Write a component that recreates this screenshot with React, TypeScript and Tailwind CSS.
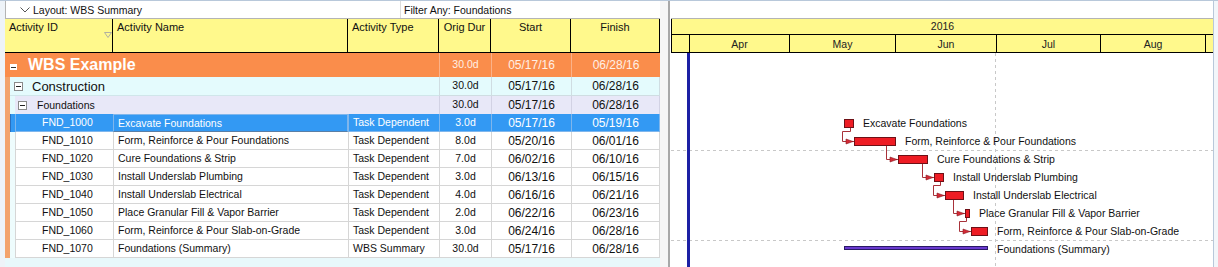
import React from 'react';

const COLS = 'grid grid-cols-[108px_235px_91px_52px_80px_89px]';

interface Act {
  id: string;
  name: string;
  type: string;
  dur: string;
  start: string;
  finish: string;
  bar: [number, number];
  summary?: boolean;
}

const acts: Act[] = [
  { id: 'FND_1000', name: 'Excavate Foundations', type: 'Task Dependent', dur: '3.0d', start: '05/17/16', finish: '05/19/16', bar: [844, 853] },
  { id: 'FND_1010', name: 'Form, Reinforce & Pour Foundations', type: 'Task Dependent', dur: '8.0d', start: '05/20/16', finish: '06/01/16', bar: [854, 895] },
  { id: 'FND_1020', name: 'Cure Foundations & Strip', type: 'Task Dependent', dur: '7.0d', start: '06/02/16', finish: '06/10/16', bar: [898, 927] },
  { id: 'FND_1030', name: 'Install Underslab Plumbing', type: 'Task Dependent', dur: '3.0d', start: '06/13/16', finish: '06/15/16', bar: [934, 943] },
  { id: 'FND_1040', name: 'Install Underslab Electrical', type: 'Task Dependent', dur: '4.0d', start: '06/16/16', finish: '06/21/16', bar: [945, 963] },
  { id: 'FND_1050', name: 'Place Granular Fill & Vapor Barrier', type: 'Task Dependent', dur: '2.0d', start: '06/22/16', finish: '06/23/16', bar: [965, 969] },
  { id: 'FND_1060', name: 'Form, Reinforce & Pour Slab-on-Grade', type: 'Task Dependent', dur: '3.0d', start: '06/24/16', finish: '06/28/16', bar: [971, 987] },
  { id: 'FND_1070', name: 'Foundations (Summary)', type: 'WBS Summary', dur: '30.0d', start: '05/17/16', finish: '06/28/16', bar: [844, 987], summary: true },
];

// gantt canvas origin in page coords
const X0 = 671;
const Y0 = 53;
const rowTop = (i: number) => 114 + i * 18;

const months: [string, number][] = [
  ['', 18],
  ['Apr', 100],
  ['May', 106],
  ['Jun', 101],
  ['Jul', 104],
  ['Aug', 105],
  ['', 8],
];

function MinusBox({ small }: { small?: boolean }) {
  if (small) {
    return (
      <span className="flex h-[6px] w-[7px] items-center justify-center bg-white">
        <span className="h-px w-[5px] bg-[#333]" />
      </span>
    );
  }
  return (
    <span className="flex h-[9px] w-[9px] shrink-0 items-center justify-center border border-[#8a8a8a] bg-white">
      <span className="h-px w-[5px] bg-[#222]" />
    </span>
  );
}

function HeaderCell({ children, center }: { children?: React.ReactNode; center?: boolean }) {
  return (
    <div className={`relative border-r border-black px-[4px] pt-[2px] leading-[13px] text-[11px] text-[#111] ${center ? 'text-center' : ''}`}>
      {children}
    </div>
  );
}

function Gantt() {
  const conns: string[] = [];
  for (let i = 0; i < 6; i++) {
    const [pl, pr] = acts[i].bar;
    const nl = acts[i + 1].bar[0];
    const pb = rowTop(i) + 13 - Y0;
    const cy = rowTop(i + 1) + 9 - Y0;
    const vx = nl - 12;
    if (vx >= pl && vx <= pr) {
      conns.push(`M${vx - X0 + 0.5} ${pb} V${cy + 0.5} H${nl - X0}`);
    } else {
      const jx = pr - 3;
      conns.push(`M${jx - X0 + 0.5} ${pb} V${pb + 4.5} H${vx - X0 + 0.5} V${cy + 0.5} H${nl - X0}`);
    }
  }

  return (
    <div className="flex w-[542px] flex-col">
      <div className="h-[18px] border-b border-[#b4b4b4] bg-white" />
      <div className="flex h-[34px] flex-col border-b border-l border-black bg-[#fff98c] text-[10.5px] text-[#222]">
        <div className="flex h-[16px] items-center justify-center border-b border-black leading-none">2016</div>
        <div className="flex flex-1">
          {months.map(([m, w], i) => (
            <div
              key={i}
              style={{ width: w }}
              className={`flex shrink-0 items-center justify-center pt-px leading-none ${i < months.length - 1 ? 'border-r border-black' : ''}`}
            >
              {m}
            </div>
          ))}
        </div>
      </div>
      <div className="relative flex-1 bg-white">
        <svg className="absolute inset-0" width={542} height={214}>
          <line x1={0} x2={542} y1={97.5} y2={97.5} stroke="#c8c8c8" strokeDasharray="3 3" />
          <line x1={0} x2={542} y1={187.5} y2={187.5} stroke="#c8c8c8" strokeDasharray="3 3" />
          <line x1={324.5} x2={324.5} y1={0} y2={214} stroke="#c8c8c8" strokeDasharray="3 3" />
          <rect x={16} y={0} width={3} height={214} fill="#1c20a4" />
          {conns.map((d, i) => {
            const nl = acts[i + 1].bar[0] - X0;
            const cy = rowTop(i + 1) + 9 - Y0 + 0.5;
            return (
              <g key={i}>
                <path d={d} fill="none" stroke="#a8323a" strokeWidth={1} />
                <polygon points={`${nl - 8},${cy - 2.5} ${nl - 1},${cy} ${nl - 8},${cy + 2.5}`} fill="#d42a36" stroke="#8a1c24" strokeWidth={0.6} />
              </g>
            );
          })}
          {acts.map((a, i) => {
            const [l, r] = a.bar;
            if (a.summary) {
              return (
                <rect key={a.id} x={l - X0 + 0.5} y={rowTop(i) + 6 - Y0 + 0.5} width={r - l} height={3} fill="#6a3ad0" stroke="#2a1a66" />
              );
            }
            return (
              <rect key={a.id} x={l - X0 + 0.5} y={rowTop(i) + 5 - Y0 + 0.5} width={r - l} height={8} fill="#ee1c24" stroke="#6e1016" />
            );
          })}
        </svg>
        {acts.map((a, i) => (
          <span
            key={a.id}
            className="absolute whitespace-nowrap text-[10.5px] leading-[13px] text-[#111]"
            style={{ left: a.bar[1] + 10 - X0, top: rowTop(i) + 3 - Y0 }}
          >
            {a.name}
          </span>
        ))}
      </div>
    </div>
  );
}

export default function App() {
  return (
    <div className="flex h-[267px] w-[1218px] overflow-hidden border-t border-[#b8c8da] bg-white font-['Liberation_Sans',Arial,sans-serif] text-[10.5px] text-[#111]">
      {/* grid panel */}
      <div className="flex w-[660px] flex-col bg-[#eef3f8] pl-[5px]">
        <div className="flex h-[18px] border-b border-l border-[#b4b4b4] bg-white">
          <div className="flex w-[395px] items-center border-r border-[#dcdcdc] pt-px">
            <svg width={10} height={6} className="ml-[14px] mr-[3px]">
              <polyline points="0.5,0.5 5,5 9.5,0.5" fill="none" stroke="#555" strokeWidth={1} />
            </svg>
            <span className="leading-none">Layout: WBS Summary</span>
          </div>
          <div className="flex items-center pl-[3px] pt-px leading-none">Filter Any: Foundations</div>
        </div>

        <div className={`${COLS} h-[34px] border-b border-black bg-[#fff98c]`}>
          <HeaderCell>
            Activity ID
            <svg width={8} height={6} className="absolute left-[99px] top-[13px]">
              <polygon points="0.5,0.5 7.5,0.5 4,5.5" fill="none" stroke="#b0b0a0" strokeWidth={1} />
            </svg>
          </HeaderCell>
          <HeaderCell>Activity Name</HeaderCell>
          <HeaderCell>Activity Type</HeaderCell>
          <HeaderCell center>Orig Dur</HeaderCell>
          <HeaderCell center>Start</HeaderCell>
          <HeaderCell center>Finish</HeaderCell>
        </div>

        {/* WBS Example */}
        <div className={`${COLS} h-[24px] bg-[#fa8d4b]`}>
          <div className="col-span-3 flex items-center">
            <span className="ml-[5px] mt-[4px]">
              <MinusBox small />
            </span>
            <span className="ml-[11px] text-[16px] font-bold leading-none text-white">WBS Example</span>
          </div>
          <div className="flex items-center justify-center border-l border-[#fbb289] text-[10.5px] text-[#fff0e6]">30.0d</div>
          <div className="flex items-center justify-center border-l border-[#fbb289] text-[12px] text-[#fff0e6]">05/17/16</div>
          <div className="flex items-center justify-center border-l border-[#fbb289] text-[12px] text-[#fff0e6]">06/28/16</div>
        </div>

        {/* Construction */}
        <div className={`${COLS} h-[19px] bg-[#e4fbfd]`}>
          <div className="col-span-3 flex">
            <span className="w-[5px] bg-[#f3a36c]" />
            <div className="flex flex-1 items-center border-b border-[#d0e6ea]">
              <span className="ml-[4px]">
                <MinusBox />
              </span>
              <span className="ml-[9px] text-[13px] leading-none">Construction</span>
            </div>
          </div>
          <div className="flex items-center justify-center border-b border-l border-[#cfdde2]">30.0d</div>
          <div className="flex items-center justify-center border-b border-l border-[#cfdde2] text-[12px]">05/17/16</div>
          <div className="flex items-center justify-center border-b border-l border-r border-[#cfdde2] text-[12px]">06/28/16</div>
        </div>

        {/* Foundations */}
        <div className={`${COLS} h-[18px]`}>
          <div className="col-span-3 flex">
            <span className="w-[5px] bg-[#f3a36c]" />
            <span className="w-[5px] bg-[#e4fbfd]" />
            <div className="flex flex-1 items-center border-b border-[#d2d2e4] bg-[#e8e8f8]">
              <span className="ml-[3px]">
                <MinusBox />
              </span>
              <span className="ml-[10px] leading-none">Foundations</span>
            </div>
          </div>
          <div className="flex items-center justify-center border-b border-l border-[#d2d2e4] bg-[#e8e8f8]">30.0d</div>
          <div className="flex items-center justify-center border-b border-l border-[#d2d2e4] bg-[#e8e8f8] text-[12px]">05/17/16</div>
          <div className="flex items-center justify-center border-b border-l border-r border-[#d2d2e4] bg-[#e8e8f8] text-[12px]">06/28/16</div>
        </div>

        {acts.map((a, i) => {
          const sel = i === 0;
          const line = sel ? 'border-[#7fb6ec]' : 'border-[#d6d6d6]';
          const cell = `flex items-center border-b border-l ${line}`;
          return (
            <div key={a.id} className={`${COLS} h-[18px] ${sel ? 'bg-[#3399f3] text-white' : 'bg-white'}`}>
              <div className="flex">
                <span className="w-[5px] bg-[#f3a36c]" />
                <span className={`w-[5px] ${sel ? 'border-l border-[#2a70c0] bg-[#3399f3]' : 'bg-[#eefcfd]'}`} />
                <div className={`${cell} flex-1 pl-[26px] leading-none`}>{a.id}</div>
              </div>
              <div className={`${cell} pl-[4px] leading-none ${sel ? 'border-[#5a7fa6] border-t border-r border-b-[#5a7fa6]' : ''}`}>{a.name}</div>
              <div className={`${cell} pl-[4px] leading-none`}>{a.type}</div>
              <div className={`${cell} justify-center leading-none`}>{a.dur}</div>
              <div className={`${cell} justify-center text-[12px] leading-none`}>{a.start}</div>
              <div className={`${cell} justify-center border-r text-[12px] leading-none`}>{a.finish}</div>
            </div>
          );
        })}
        <div className="flex-1 bg-[#e8f8fb]" />
      </div>

      {/* splitter */}
      <div className="flex w-[11px]">
        <div className="w-[8px] bg-[#f6f6f6]" />
        <div className="w-[2px] bg-[#a8a8a8]" />
        <div className="w-px bg-white" />
      </div>

      <Gantt />

      <div className="w-[5px] border-l border-[#b8c8da] bg-[#f2f6fa]" />
    </div>
  );
}
